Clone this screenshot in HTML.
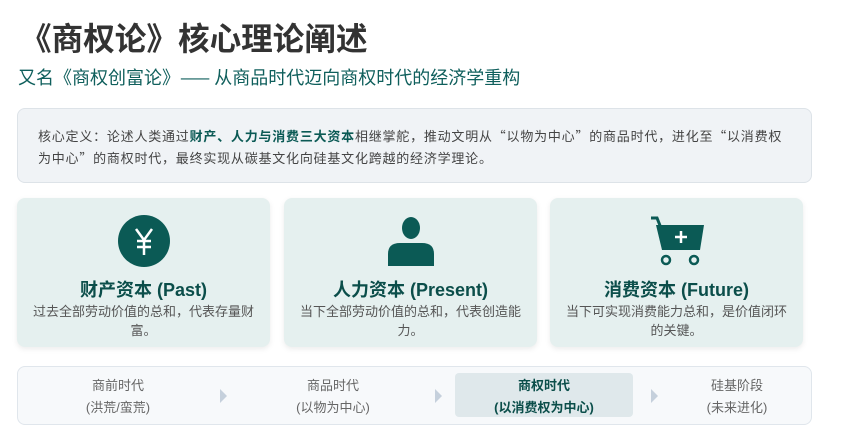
<!DOCTYPE html>
<html><head><meta charset="utf-8"><style>
*{margin:0;padding:0;box-sizing:border-box}
body{width:846px;height:441px;background:#fff;font-family:"Liberation Sans","Noto Sans CJK SC",sans-serif;position:relative;overflow:hidden}
.a{position:absolute}
h1{position:absolute;left:20px;top:17px;font-size:31.6px;font-weight:bold;color:#333;line-height:44px}
.sub{left:18px;top:64px;font-size:18px;color:#0f5f5c;line-height:26px;font-family:"Noto Sans CJK SC",sans-serif}
.def{left:17px;top:108px;width:795px;height:75px;background:#f0f3f6;border:1px solid #dde3e8;border-radius:8px;padding:16px 10px 16px 20px;font-size:13px;letter-spacing:0.78px;line-height:22px;color:#444;font-family:"Noto Sans CJK SC",sans-serif;white-space:nowrap}
.def b{color:#0b5a55}
.card{top:198px;width:253px;height:149px;background:#e5f0ef;border-radius:8px;box-shadow:0 2px 6px rgba(0,0,0,.08);text-align:center}
.card .t{position:absolute;top:78px;width:100%;font-size:18px;font-weight:bold;color:#0b4e4a}
.card .d{position:absolute;top:104px;left:14px;right:14px;font-size:13px;line-height:19px;color:#555}
.card svg{position:absolute;left:50%;top:16px;transform:translateX(-50%)}
.bar{left:17px;top:366px;width:795px;height:59px;background:#f7f9fb;border:1px solid #e0e6ec;border-radius:8px}
.it{top:375px;width:180px;text-align:center;font-size:13px;line-height:22px;color:#666}
.hl{left:455px;top:373px;width:178px;height:44px;background:#dfe8eb;border-radius:4px}
.arr{top:389px;width:0;height:0;border-top:7px solid transparent;border-bottom:7px solid transparent;border-left:7px solid #c5d0dc}
</style></head><body>
<h1>《商权论》核心理论阐述</h1>
<div class="a sub">又名《商权创富论》—— 从商品时代迈向商权时代的经济学重构</div>
<div class="a def">核心定义：论述人类通过<b>财产、人力与消费三大资本</b>相继掌舵，推动文明从“以物为中心”的商品时代，进化至“以消费权<br>为中心”的商权时代，最终实现从碳基文化向硅基文化跨越的经济学理论。</div>

<div class="a card" style="left:17px">
<svg width="54" height="54" viewBox="0 0 54 54"><circle cx="27" cy="27" r="26" fill="#0b5a55"/><path d="M19 15l8 11 8-11M27 26v15M20 27h14M20 33h14" stroke="#fff" stroke-width="2.5" fill="none"/></svg>
<div class="t">财产资本 (Past)</div><div class="d">过去全部劳动价值的总和，代表存量财富。</div></div>
<div class="a card" style="left:284px">
<svg width="54" height="54" viewBox="0 0 54 54"><ellipse cx="27" cy="14" rx="9" ry="11" fill="#0b5a55"/><path d="M4 52V40Q4 29 16 29H38Q50 29 50 40V52Z" fill="#0b5a55"/></svg>
<div class="t">人力资本 (Present)</div><div class="d">当下全部劳动价值的总和，代表创造能力。</div></div>
<div class="a card" style="left:550px">
<svg width="60" height="54" viewBox="0 0 60 54"><path d="M4 4h6l4 10" stroke="#0b5a55" stroke-width="3" fill="none"/><path d="M9 11H57L53 36H15Z" fill="#0b5a55"/><path d="M34 17v12M28 23h12" stroke="#fff" stroke-width="2.5"/><circle cx="19" cy="46" r="4" stroke="#0b5a55" stroke-width="2.5" fill="none"/><circle cx="47" cy="46" r="4" stroke="#0b5a55" stroke-width="2.5" fill="none"/></svg>
<div class="t">消费资本 (Future)</div><div class="d">当下可实现消费能力总和，是价值闭环的关键。</div></div>

<div class="a bar"></div>
<div class="a hl"></div>
<div class="a it" style="left:28px">商前时代<br>(洪荒/蛮荒)</div>
<div class="a arr" style="left:220px"></div>
<div class="a it" style="left:243px">商品时代<br>(以物为中心)</div>
<div class="a arr" style="left:435px"></div>
<div class="a it" style="left:454px;color:#0b4e4a;font-weight:bold">商权时代<br>(以消费权为中心)</div>
<div class="a arr" style="left:651px"></div>
<div class="a it" style="left:647px">硅基阶段<br>(未来进化)</div>
</body></html>
